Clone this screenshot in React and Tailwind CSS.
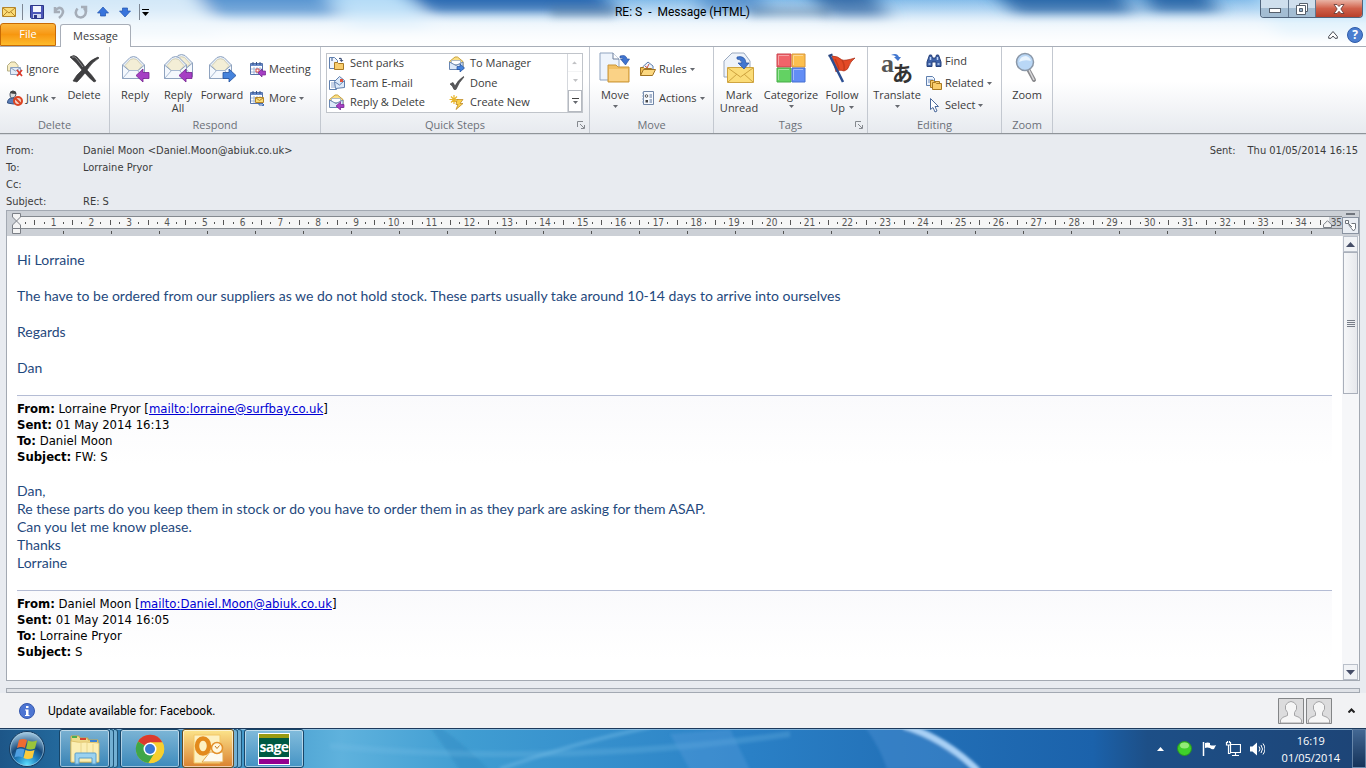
import { clsx } from 'clsx';

// ---------- Ribbon icons ----------

function PurpleArrow({ x = 0, y = 0 }) {
  return (
    <path
      transform={`translate(${x} ${y})`}
      d="M0 6.5 7 0v3.5h6v6H7V13z"
      fill="#a63fc4"
      stroke="#74238f"
      strokeWidth=".8"
    />
  );
}

function BlueArrow({ x = 0, y = 0 }) {
  return (
    <path
      transform={`translate(${x} ${y})`}
      d="M13 6.5 6 0v3.5H0v6h6V13z"
      fill="#4583dc"
      stroke="#22509e"
      strokeWidth=".8"
    />
  );
}

function OpenEnvelope({ x = 0, y = 0 }) {
  return (
    <g transform={`translate(${x} ${y})`} strokeLinejoin="round">
      <path d="M.5 9 8 1.5Q11.500 -.5 15 1.500L22.500 9v13.500H.5z" fill="#e6eef8" stroke="#8fa3bf" />
      <path d="M3 9.500 8.500 3.500Q11.500 2 14.500 3.500L20 9.500l-4 5H7z" fill="#f3eed6" stroke="#c9c3a4" strokeWidth=".7" />
      <path d="M.5 9 7 14.500h9L22.500 9v13.500H.5z" fill="#f4f8fd" stroke="#8fa3bf" />
      <path d="m1 22 6.500-7.500h8L22 22" fill="none" stroke="#a9bbd3" />
    </g>
  );
}

function ReplyIcon() {
  return (
    <svg className="size-8" viewBox="0 0 32 32" aria-hidden="true">
      <OpenEnvelope x={3} y={4} />
      <PurpleArrow x={17} y={17} />
    </svg>
  );
}

function ReplyAllIcon() {
  return (
    <svg className="size-8" viewBox="0 0 32 32" aria-hidden="true">
      <OpenEnvelope x={8} y={2} />
      <OpenEnvelope x={2} y={4} />
      <PurpleArrow x={17} y={17} />
    </svg>
  );
}

function ForwardIcon() {
  return (
    <svg className="size-8" viewBox="0 0 32 32" aria-hidden="true">
      <OpenEnvelope x={3} y={4} />
      <BlueArrow x={17} y={17} />
    </svg>
  );
}

function DeleteIcon() {
  return (
    <svg className="size-8" viewBox="0 0 32 32" aria-hidden="true">
      <path
        d="M2 5q4-3 7 0 5 5 8 10 6-8 13-10l1 1q-7 4-12 12 5 5 9 11l-2 1q-5-4-9-9-4 5-8 9l-4-1q3-6 9-11Q9 11 2 5z"
        fill="#3f3f41"
        stroke="#2c2c2e"
        strokeWidth=".6"
      />
      <path d="M4 5q3-1 5 2l6 8" fill="none" stroke="#8b8b8e" />
    </svg>
  );
}

function MoveIcon() {
  return (
    <svg className="size-8" viewBox="0 0 32 32" aria-hidden="true">
      <path d="M1 1h13l6 6v21H1z" fill="#eef4fc" stroke="#8fa3bf" />
      <path d="M14 1v6h6" fill="#fff" stroke="#6c7f9c" />
      <path d="M9 13h8l2 2h11v15H9z" fill="#f2c063" stroke="#c9963b" />
      <path d="M10 17h19v12H10z" fill="#fad286" />
      <path d="M21 4q6-2 7 3h2.500l-4 6-5-6h2.500q0-2-3-1z" fill="#3f74d0" stroke="#244c9c" strokeWidth=".6" />
    </svg>
  );
}

function MarkUnreadIcon() {
  return (
    <svg className="size-8" viewBox="0 0 32 32" aria-hidden="true">
      <path d="M1 9 9 1h12l6 8v16H1z" fill="#eef3fa" stroke="#9aa9bf" />
      <path d="M4.500 15.500h26v15h-26z" fill="#fbdc77" stroke="#cfa440" />
      <path d="m5 16 12.500 9L30 16M5 30l9-8M30 30l-9-8" fill="none" stroke="#cfa440" />
      <path d="M14 5q8-2 9 6h3l-5 6-6-6h4q-1-4-5-4z" fill="#4277d0" stroke="#25509f" strokeWidth=".7" />
    </svg>
  );
}

function CategorizeIcon() {
  return (
    <svg className="size-8" viewBox="0 0 32 32" aria-hidden="true">
      <path d="M2 2h14v13H2z" fill="#f0646a" stroke="#c9434d" />
      <path d="M17 2h13v13H17z" fill="#fcbf4e" stroke="#d8963a" />
      <path d="M2 16h14v14H2z" fill="#63d263" stroke="#46ab46" />
      <path d="M17 16h13v14H17z" fill="#628df5" stroke="#446fd0" />
      <path d="M3.500 13V3.500H14M18.500 13V3.500H28M3.500 28V17.500H14M18.500 28V17.500H28" fill="none" stroke="#fff" opacity=".4" />
    </svg>
  );
}

function FollowUpIcon() {
  return (
    <svg className="size-8" viewBox="0 0 32 32" aria-hidden="true">
      <path d="M6 4q6 0 10 4 3 1 13-2-5 4-6 8-1 4-5 5-6-2-8 1z" fill="#e34a26" stroke="#a82a12" strokeWidth=".7" />
      <path d="M9 7q3 6 4 10M16 8q3 5 2 10" fill="none" stroke="#b93417" strokeWidth="1.500" opacity=".7" />
      <path d="m4 4 13 26" stroke="#2c4f93" strokeWidth="2.500" />
      <path d="m2.500 4 4-1.500" stroke="#29457d" strokeWidth="2" />
    </svg>
  );
}

function TranslateIcon() {
  return (
    <svg className="size-8 overflow-visible" viewBox="0 0 32 32" aria-hidden="true">
      <text x="0" y="20" fontFamily="Liberation Serif, serif" fontWeight="bold" fontSize="26" fill="#555">a</text>
      <text x="11" y="29" fontFamily="Noto Sans CJK JP, sans-serif" fontWeight="bold" fontSize="21" fill="#333">あ</text>
      <path d="M10 3q6-3 8 2h2l-3 4-4-4h2q-1-2-5-2z" fill="#4277d0" />
    </svg>
  );
}

function ZoomIcon() {
  return (
    <svg className="size-8" viewBox="0 0 32 32" aria-hidden="true">
      <path d="m17 17 6 11" stroke="#8a8a8d" strokeWidth="4" strokeLinecap="round" />
      <path d="m18 18 5 10" stroke="#d9d9db" strokeWidth="1.500" />
      <circle cx="14" cy="10" r="8.500" fill="#b9d7f6" stroke="#8b98a8" strokeWidth="1.500" />
      <path d="M8 10q1-6 7-6 4 1 5 5-6-2-12 1z" fill="#e9f4fe" />
    </svg>
  );
}

// 16px icons

function MiniMail() {
  return (
    <g>
      <path d="M.5 5.500 6 1h2.500L14 5.500v7H.5z" fill="#fbdf83" stroke="#c9a13d" />
      <path d="M2.500 4.500h9v4h-9z" fill="#fff" stroke="#8fa6c6" strokeWidth=".7" />
      <path d="M.5 6 7 9.500 14 6v7.500H.5z" fill="#dce9f9" stroke="#6886b2" />
    </g>
  );
}

function MiniCalendar() {
  return (
    <g>
      <path d="M.5 2.500h12v11H.5z" fill="#fff" stroke="#5674aa" />
      <path d="M1 3h11v2H1z" fill="#6a8ccb" />
      <path d="M3 1v3M6.500 1v3M10 1v3" stroke="#36528b" />
      <path d="M1 8h11M1 11h11M4 6v7M7 6v7M10 6v7" stroke="#8ea7cf" strokeWidth=".8" />
    </g>
  );
}

function Folder({ x = 0, y = 0 }) {
  return (
    <path
      transform={`translate(${x} ${y})`}
      d="M.5 1.500h3l1 1h5v6h-9z"
      fill="#f8cd6d"
      stroke="#a97a22"
    />
  );
}

const smallIcons = {
  ignore: (
    <>
      <path d="M.5 4.500 4 1h4l3 3.500V10H.5z" fill="#f7edc5" stroke="#b5ae84" />
      <path d="M3.500 6.500h10v7h-10z" fill="#e3ecf8" stroke="#8ba0bf" />
      <path d="m4 7 4.500 3L13 7" fill="none" stroke="#8ba0bf" />
      <path d="m10 9 5 6m0-6-5 6" stroke="#dd3b2c" strokeWidth="1.800" />
    </>
  ),
  junk: (
    <>
      <path d="M3 4q0-3 3-3t3 3-3 4-3-4z" fill="#dcdcdc" stroke="#4b5563" />
      <path d="M3 3q1-3 4-2t2 3q-4 0-6-1z" fill="#444" />
      <path d="M.5 13q0-5 5-5t5 5l-4 1z" fill="#5c7fb9" stroke="#344f7f" />
      <circle cx="11" cy="11" r="4" fill="#f7d3c7" stroke="#dc4523" strokeWidth="2" />
      <path d="m8 8 6 6" stroke="#dc4523" strokeWidth="2" />
    </>
  ),
  meeting: (
    <>
      <MiniCalendar />
      <path d="M6 8h3v3H6z" fill="#fff" stroke="#d64545" />
      <path d="m8 12 4-4v2h3.500v4H12v2z" fill="#a63fc4" stroke="#74238f" strokeWidth=".7" />
    </>
  ),
  more: (
    <>
      <MiniCalendar />
      <path d="M5.500 7.500h8v5h-8z" fill="#fbdc77" stroke="#b4852a" />
      <path d="m6 8 3.500 2.500L13 8" fill="none" stroke="#b4852a" />
      <path d="M9 13v2h5m-2-2 2 2-2 1" fill="none" stroke="#3767b5" />
    </>
  ),
  moveTo: (
    <>
      <path d="M.5 1.500h5l3 3v8h-8z" fill="#eef4fc" stroke="#5f7fae" />
      <path d="M3 5V2" stroke="#33528a" />
      <Folder x={5} y={5} />
      <path d="M10 2q3-1 3 2h1.500L12.500 6 10.500 4H12q0-1-2-1z" fill="#3c4f77" />
    </>
  ),
  team: (
    <>
      <path d="M.5 5.500h7v9h-7z" fill="#fff" stroke="#5f7fae" />
      <path d="M2 8h4M2 10h4M2 12h4" stroke="#8ea7cf" />
      <path d="m5.500 6.500 5-5 5 4v7l-9 1z" fill="#dce9f9" stroke="#5f7fae" />
      <path d="m6 7 4.500 3L15 6" fill="none" stroke="#5f7fae" />
      <path d="M11 4h3v3h-3z" fill="#e1533d" />
    </>
  ),
  replyDelete: (
    <>
      <MiniMail />
      <path d="m7 12 4.500-4v2.500H15v3h-3.500V16z" fill="#a63fc4" stroke="#74238f" strokeWidth=".7" />
    </>
  ),
  manager: (
    <>
      <MiniMail />
      <path d="m15.500 12-4.500-4v2.500H8v3h3V16z" fill="#4583dc" stroke="#22509e" strokeWidth=".7" />
    </>
  ),
  done: <path d="m1 9 3-1.500L6 11q3-6 8.500-9.500l.5.5q-5 5-8 12.500H5Q4 11 1 9z" fill="#58595b" stroke="#3a3a3c" strokeWidth=".6" />,
  create: (
    <>
      <path d="M5 1v9M.5 5.500h9M2 2.500l6 6M8 2.500l-6 6" stroke="#e8b52b" strokeWidth="1.200" />
      <path d="M8 5.500h6l-3 4h3l-7 6 2-5H7z" fill="#fbd04b" stroke="#b8821d" strokeWidth=".7" />
    </>
  ),
  rules: (
    <>
      <path d="M2.500 6 8 1l5 4v6H2.500z" fill="#eef4fc" stroke="#5f7fae" />
      <path d="m5 5 5 4M9 3l-3 6" stroke="#c95545" />
      <path d="M.5 14.500v-8h3l1 1h7v2" fill="#f2bf54" stroke="#a07322" />
      <path d="m.5 14.500 3-6h12l-3 6z" fill="#fcd880" stroke="#a07322" />
    </>
  ),
  actions: (
    <>
      <path d="M3.500 1.500h10v13h-10z" fill="#f7fafe" stroke="#7187a8" />
      <path d="M2 3h2M2 6h2M2 9h2M2 12h2" stroke="#8fa4c4" />
      <circle cx="6.500" cy="6" r="1.300" fill="none" stroke="#333" strokeWidth=".8" />
      <path d="M5.500 10H8v2.500H5.500z" fill="#444" />
      <path d="M9.500 5h2.500M9.500 7H12M9.500 10H12M9.500 12H12" stroke="#57709a" />
    </>
  ),
  find: (
    <>
      <path d="M1 9 3.500 2h2l1 3h3l1-3h2L15 9v4.500h-5V9H6v4.500H1z" fill="#3d60a6" stroke="#26407a" />
      <path d="M2.500 11h2M11.500 11h2M4.500 4v3M11.500 4v3" stroke="#bcd2f5" strokeWidth="1.500" />
    </>
  ),
  related: (
    <>
      <path d="M.5 1.500h6l2 2v7h-8z" fill="#eef4fc" stroke="#5f7fae" />
      <path d="M2 5h5M2 7h5" stroke="#6f8ec0" />
      <Folder x={4} y={4} />
      <Folder x={6} y={6} />
    </>
  ),
  select: <path d="M4.500 1.500v11l2.500-2 2 4.500 2-1-2-4.500h3.500z" fill="#fff" stroke="#4c6a9c" />,
};

function SmallIcon({ name }) {
  return (
    <svg className="size-4 shrink-0" viewBox="0 0 16 16" aria-hidden="true">
      {smallIcons[name]}
    </svg>
  );
}

// ---------- Ribbon ----------

function Caret() {
  return (
    <svg className="w-[5px] h-[3px] shrink-0" viewBox="0 0 5 3" aria-hidden="true">
      <path d="M0 0h5L2.500 3z" fill="#66696f" />
    </svg>
  );
}

function BigButton({ icon: Icon, lines, caret, className }) {
  const inline = caret && lines.length > 1;
  return (
    <button type="button" className={clsx('flex flex-col items-center pt-[2px] leading-[13px]', className)}>
      <Icon />
      <span className="mt-1">{lines[0]}</span>
      {lines[1] && (
        <span className="flex items-center gap-1">
          {lines[1]}
          {inline && <Caret />}
        </span>
      )}
      {caret && !inline && <span className="mt-1"><Caret /></span>}
    </button>
  );
}

function SmallButton({ icon, label, caret }) {
  return (
    <button type="button" className="flex items-center gap-[3px] h-[22px] whitespace-nowrap">
      <SmallIcon name={icon} />
      <span>{label}</span>
      {caret && <Caret />}
    </button>
  );
}

function Group({ title, launcher, className, children }) {
  return (
    <section className={clsx('flex flex-col shrink-0 border-r border-[#c3c8d0]', className)}>
      <div className="flex grow pt-[3px]">{children}</div>
      <div className="flex items-center h-4 text-[#6b7078]">
        <h2 className="grow text-center">{title}</h2>
        {launcher && (
          <button type="button" className="-ml-3 mr-1" aria-label={`${title} options`}>
            <svg className="size-2" viewBox="0 0 8 8">
              <path d="M.5 6V.5H6M3 3l4 4M7.500 4v3.500H4" fill="none" stroke="#85898f" />
            </svg>
          </button>
        )}
      </div>
    </section>
  );
}

const quickSteps = [
  ['moveTo', 'Sent parks'],
  ['manager', 'To Manager'],
  ['team', 'Team E-mail'],
  ['done', 'Done'],
  ['replyDelete', 'Reply & Delete'],
  ['create', 'Create New'],
];

function Ribbon() {
  return (
    <div className="flex h-[87px] border-b border-[#8f9499] bg-linear-to-b from-white from-40% to-[#e7eaef] text-[#3b3b3b]">
      <Group title="Delete" className="w-[110px]">
        <div className="flex flex-col gap-[7px] w-[60px] pl-[7px] pt-2">
          <SmallButton icon="ignore" label="Ignore" />
          <SmallButton icon="junk" label="Junk" caret />
        </div>
        <BigButton icon={DeleteIcon} lines={['Delete']} className="w-12" />
      </Group>

      <Group title="Respond" className="w-[211px]">
        <BigButton icon={ReplyIcon} lines={['Reply']} className="w-[50px]" />
        <BigButton icon={ReplyAllIcon} lines={['Reply', 'All']} className="w-9" />
        <BigButton icon={ForwardIcon} lines={['Forward']} className="w-[52px]" />
        <div className="flex flex-col gap-[7px] pl-[2px] pt-2">
          <SmallButton icon="meeting" label="Meeting" />
          <SmallButton icon="more" label="More" caret />
        </div>
      </Group>

      <Group title="Quick Steps" launcher className="w-[269px]">
        <div className="flex w-[257px] h-[60px] ml-[5px] mt-[3px] border border-[#c0c4ca] bg-white">
          <div className="grid grid-cols-2 grow">
            {quickSteps.map(([icon, label]) => (
              <button key={label} type="button" className="flex items-center gap-[5px] pl-[2px] whitespace-nowrap">
                <SmallIcon name={icon} />
                {label}
              </button>
            ))}
          </div>
          <div className="flex flex-col w-[15px] border-l border-[#d5d8dd]">
            <button type="button" className="flex grow items-center justify-center rotate-180 opacity-40" aria-label="Previous row"><Caret /></button>
            <button type="button" className="flex grow items-center justify-center border-t border-[#e2e4e8] opacity-40" aria-label="Next row"><Caret /></button>
            <button type="button" className="flex flex-col gap-[2px] grow items-center justify-center border border-[#b5b9c0]" aria-label="More quick steps">
              <span className="w-[7px] h-px bg-[#444]" />
              <Caret />
            </button>
          </div>
        </div>
      </Group>

      <Group title="Move" className="w-[124px]">
        <BigButton icon={MoveIcon} lines={['Move']} caret className="w-[50px]" />
        <div className="flex flex-col gap-[7px] pt-2">
          <SmallButton icon="rules" label="Rules" caret />
          <SmallButton icon="actions" label="Actions" caret />
        </div>
      </Group>

      <Group title="Tags" launcher className="w-[154px]">
        <BigButton icon={MarkUnreadIcon} lines={['Mark', 'Unread']} className="w-[50px]" />
        <BigButton icon={CategorizeIcon} lines={['Categorize']} caret className="w-[54px]" />
        <BigButton icon={FollowUpIcon} lines={['Follow', 'Up']} caret className="w-12" />
      </Group>

      <Group title="Editing" className="w-[134px]">
        <BigButton icon={TranslateIcon} lines={['Translate']} caret className="w-[58px]" />
        <div className="flex flex-col">
          <SmallButton icon="find" label="Find" />
          <SmallButton icon="related" label="Related" caret />
          <SmallButton icon="select" label="Select" caret />
        </div>
      </Group>

      <Group title="Zoom" className="w-[51px]">
        <BigButton icon={ZoomIcon} lines={['Zoom']} className="w-[50px]" />
      </Group>
    </div>
  );
}

// ---------- Title bar ----------

function TitleBar() {
  return (
    <header className="relative overflow-hidden bg-linear-to-b from-[#86bdea] via-[#cfe6f8] to-[#fbfdff]">
      <svg className="absolute inset-0 size-full" viewBox="0 0 1366 48" preserveAspectRatio="none" aria-hidden="true">
        <defs>
          <filter id="soft" x="-20%" y="-60%" width="140%" height="220%">
            <feGaussianBlur stdDeviation="10 5" />
          </filter>
          <linearGradient id="fade" x1="0" y1="0" x2="0" y2="1">
            <stop offset="0" stopColor="#fff" stopOpacity="0" />
            <stop offset=".2" stopColor="#fff" stopOpacity=".15" />
            <stop offset=".5" stopColor="#fff" stopOpacity=".65" />
            <stop offset="1" stopColor="#fff" stopOpacity=".95" />
          </linearGradient>
        </defs>
        <g filter="url(#soft)">
          <path d="M-20-20h210l30 60H-20z" fill="#d3e8f8" />
          <path d="M185-20h125l30 38H215z" fill="#5b97d2" />
          <path d="M325-20h65l40 50H350z" fill="#b5dcf7" />
          <path d="M395-20h195l30 34H430z" fill="#2f6db4" />
          <path d="M700-20h50l20 34h-70z" fill="#5a95d0" />
          <path d="M800-20h65l25 40h-60z" fill="#3d73ae" />
          <path d="M985-20h130l20 36h-120z" fill="#2f6cac" />
          <path d="M1140-20h60l20 34h-70z" fill="#2f6cac" />
          <path d="M1250-20h140v60h-110z" fill="#b0dcf8" />
        </g>
        <path d="M0 0h1366v48H0z" fill="url(#fade)" />
      </svg>

      <div className="relative flex items-start h-6">
        <div className="flex flex-1 items-center gap-[6px] h-6 pl-[2px]">
          <svg className="size-[14px]" viewBox="0 0 14 14" aria-hidden="true">
            <path d="M.5 2.500h13v9H.5z" fill="#fbdc77" stroke="#b4852a" />
            <path d="m1 3 6 5 6-5M1 11l4-4M13 11 9 7" fill="none" stroke="#b4852a" />
          </svg>
          <span className="w-px h-4 bg-[#7d8794]" />
          <button type="button" aria-label="Save">
            <svg className="size-4" viewBox="0 0 16 16">
              <path d="M1.500 1.500h13v13h-12l-1-1z" fill="#4b57b8" stroke="#2d3788" />
              <path d="M4 2h8v6H4z" fill="#f3f6fd" />
              <path d="M4 10h8v4H4z" fill="#cfd6ef" />
              <path d="M5 11h3v3H5z" fill="#2d3788" />
            </svg>
          </button>
          <button type="button" aria-label="Undo">
            <svg className="size-4" viewBox="0 0 16 16">
              <path d="M4 3v5h5M4 7q4-5 7-2 3 4-3 9" fill="none" stroke="#a5adb8" strokeWidth="2.500" />
            </svg>
          </button>
          <button type="button" aria-label="Redo">
            <svg className="size-4" viewBox="0 0 16 16">
              <path d="M8 3h5v5M4.500 4.500Q1 9 4.500 12.500 9 15 12 11q2-4-1-7" fill="none" stroke="#a5adb8" strokeWidth="2.500" />
            </svg>
          </button>
          <button type="button" aria-label="Previous item">
            <svg className="size-4" viewBox="0 0 16 16">
              <path d="m8 3 5.500 6H10.500v3h-5V9H2.500z" fill="#3874dc" stroke="#2355ae" strokeWidth=".7" />
            </svg>
          </button>
          <button type="button" aria-label="Next item">
            <svg className="size-4" viewBox="0 0 16 16">
              <path d="m8 13 5.500-6H10.500V4h-5v3H2.500z" fill="#3874dc" stroke="#2355ae" strokeWidth=".7" />
            </svg>
          </button>
          <span className="w-px h-4 bg-[#7d8794]" />
          <button type="button" className="-ml-1 flex flex-col items-center gap-[2px]" aria-label="Customize toolbar">
            <span className="w-[7px] h-px bg-black" />
            <svg className="w-[7px] h-1" viewBox="0 0 7 4"><path d="M0 0h7L3.500 4z" /></svg>
          </button>
        </div>
        <div className="relative flex items-center justify-center h-6 text-xs font-[Roboto,sans-serif] text-black">
          <span className="absolute right-full w-16 h-2 bg-[#4c6f94]/50 blur-xs" />
          <h1 className="whitespace-pre">RE: S  -  Message (HTML)</h1>
          <span className="absolute left-full w-20 h-2 bg-[#4c6f94]/50 blur-xs" />
        </div>
        <div className="flex flex-1 justify-end pr-[3px]">
          <div className="flex h-[18px] border border-t-0 border-[#50647c] rounded-b-[4px] overflow-hidden">
            <button type="button" className="w-7 flex items-center justify-center bg-linear-to-b from-[#cfdfed] from-50% to-[#a3bdd3] to-50% border-r border-[#62768d]" aria-label="Minimize">
              <span className="w-3 h-[5px] mt-1 bg-white border border-[#56606c]" />
            </button>
            <button type="button" className="w-[27px] flex items-center justify-center bg-linear-to-b from-[#cfdfed] from-50% to-[#a3bdd3] to-50% border-r border-[#62768d]" aria-label="Restore">
              <svg className="size-3" viewBox="0 0 12 12" fill="#fff" stroke="#56606c">
                <path d="M3.500.5h8v8h-8z" />
                <path d="M.5 2.500h9v9h-9z" />
                <path d="M3.500 5.500h3v3h-3z" fill="#93b2cd" />
              </svg>
            </button>
            <button type="button" className="w-[46px] flex items-center justify-center bg-linear-to-b from-[#e8b3a5] via-[#d0604a] via-50% to-[#b8402a]" aria-label="Close">
              <svg className="w-3 h-[10px]" viewBox="0 0 12 10">
                <path d="M1 .5h3l2 2 2-2h3L7.800 5 11 9.500H8L6 7.300 4 9.500H1L4.200 5z" fill="#fff" stroke="#5d3430" strokeWidth=".8" />
              </svg>
            </button>
          </div>
        </div>
      </div>

      <nav className="relative flex items-end h-[23px] border-b border-[#a8aeb8]">
        <button type="button" className="w-14 h-[23px] rounded-t-[3px] border border-[#c76a05] bg-linear-to-b from-[#fbb63c] via-[#f7970f] to-[#fdbb2c] text-white">File</button>
        <button type="button" className="w-[71px] h-[23px] ml-1 -mb-px rounded-t-[3px] border border-b-0 border-[#a8aeb8] bg-white text-[#3b3b3b]">Message</button>
        <div className="flex grow items-center justify-end gap-[9px] h-[23px] pr-[3px]">
          <button type="button" aria-label="Collapse ribbon">
            <svg className="w-[10px] h-2" viewBox="0 0 10 8">
              <path d="m.7 5.500 4.300-5 4.300 5v1.800H7L5 5 3 7.300H.7z" fill="#fff" stroke="#484d54" />
            </svg>
          </button>
          <button type="button" className="size-4 rounded-full border border-[#2f5ca9] bg-[#4b7ed0] text-white text-xs leading-none font-bold" aria-label="Help">?</button>
        </div>
      </nav>
    </header>
  );
}

// ---------- Message ----------

function HeaderRow({ label, children }) {
  return (
    <div className="flex h-[17px]">
      <dt className="w-[77px]">{label}</dt>
      <dd>{children}</dd>
    </div>
  );
}

function Ruler() {
  const marks = Array.from({ length: 34 }, (_, i) => i + 1);
  return (
    <div className="flex h-[25px] bg-[#ccd0d6]">
      <div className="relative flex flex-col grow overflow-hidden pl-[9px]">
        <div className="flex h-[13px] mt-[5px] border-y border-[#84898f] bg-[#f6f6f6] text-[10px] leading-none text-[#555] font-['DejaVu_Sans_Condensed','DejaVu_Sans',sans-serif]">
          <div className="flex w-[14px] items-center justify-end pr-1">
            <span className="w-px h-[2px] bg-[#555]" />
          </div>
          {marks.map((n) => (
            <div key={n} className="grid grid-cols-4 flex-1 items-center justify-items-center">
              <span className="w-px h-[5px] bg-[#555]" />
              <span className="w-px h-[2px] bg-[#555]" />
              <span className="flex w-0 justify-center">{n}</span>
              <span className="w-px h-[2px] bg-[#555]" />
            </div>
          ))}
          <div className="flex items-center w-[14px] pl-[5px]">
            <span className="w-px h-[5px] bg-[#555]" />
          </div>
          <div className="flex items-center justify-end w-[13px] bg-[#ccd0d6]">35</div>
        </div>
        <div className="flex pt-[2px] overflow-hidden">
          {Array.from({ length: 60 }, (_, i) => (
            <span key={i} className="w-12 h-[3px] shrink-0 border-r border-[#555]" />
          ))}
        </div>
        {/* indent handles */}
        <svg className="absolute left-[5px] top-[2px] w-[9px] h-[22px]" viewBox="0 0 9 22" fill="#f4f4f4" stroke="#7b7f86" aria-hidden="true">
          <path d="M.5.5h8V4l-4 4-4-4z" />
          <path d="m4.500 8 4 4v3.500h-8V12z" />
          <path d="M.5 15.500h8v5h-8z" />
        </svg>
        <svg className="absolute right-[10px] top-[9px] w-[9px] h-2" viewBox="0 0 9 8" fill="#f4f4f4" stroke="#7b7f86" aria-hidden="true">
          <path d="m4.500.7 4 4v2.800h-8V4.700z" />
        </svg>
      </div>
      <div className="flex flex-col w-[17px] items-center">
        <span className="w-[9px] h-[2px] my-[2px] bg-[#70757d]" />
        <button type="button" className="w-[17px] h-[17px] border border-[#8a93a1] bg-[#e9edf3]" aria-label="Toggle ruler">
          <svg className="size-[15px]" viewBox="0 0 15 15" fill="#fff" stroke="#6e737b">
            <path d="M2.500 2.500h3v3h-3zM8.500 5.500h4v5l-2 2.500-2-2.500-3-4" />
            <path d="m5 5 4 4" />
          </svg>
        </button>
      </div>
    </div>
  );
}

function ScrollBar() {
  return (
    <div className="flex flex-col w-[17px] px-px bg-[#f6f7f9] shrink-0">
      <button type="button" className="flex items-center justify-center h-4 border border-[#b9bfc9] bg-[#f1f3f6]" aria-label="Scroll up">
        <svg className="w-[9px] h-[5px]" viewBox="0 0 9 5"><path d="M0 5h9L4.500 0z" fill="#464e68" /></svg>
      </button>
      <div className="flex flex-col items-center justify-center gap-px h-[142px] border border-[#a9afba] bg-linear-to-r from-[#f6f7f9] to-[#e6e8ec]">
        <span className="w-2 h-px bg-[#777d88]" />
        <span className="w-2 h-px bg-[#777d88]" />
        <span className="w-2 h-px bg-[#777d88]" />
        <span className="w-2 h-px bg-[#777d88]" />
      </div>
      <button type="button" className="flex items-center justify-center h-4 mt-auto border border-[#b9bfc9] bg-[#f1f3f6]" aria-label="Scroll down">
        <svg className="w-[9px] h-[5px]" viewBox="0 0 9 5"><path d="M0 0h9L4.500 5z" fill="#464e68" /></svg>
      </button>
    </div>
  );
}

function QuotedHeader({ from, email, sent, to, subject }) {
  return (
    <div className="border-t border-[#b4bcd4] bg-linear-to-b from-[#fafafc] to-white pt-[5px] text-[13px] leading-4 text-black font-['DejaVu_Sans_Condensed','DejaVu_Sans',sans-serif]">
      <p><b>From:</b> {from} [<a href={`mailto:${email}`} className="text-[#0000d4] underline">mailto:{email}</a>]</p>
      <p><b>Sent:</b> {sent}</p>
      <p><b>To:</b> {to}</p>
      <p><b>Subject:</b> {subject}</p>
    </div>
  );
}

function Message() {
  return (
    <main className="flex flex-col grow px-[6px] border-t border-[#d5d9df] bg-[#e8ebf0]">
      <div className="flex justify-between pt-[7px] pr-[2px] text-[#3b3b3b] font-['DejaVu_Sans_Condensed','DejaVu_Sans',sans-serif]">
        <dl className="leading-[17px]">
          <HeaderRow label="From:">Daniel Moon &lt;Daniel.Moon@abiuk.co.uk&gt;</HeaderRow>
          <HeaderRow label="To:">Lorraine Pryor</HeaderRow>
          <HeaderRow label="Cc:" />
          <HeaderRow label="Subject:">RE: S</HeaderRow>
        </dl>
        <dl className="flex gap-3 leading-[17px]">
          <dt>Sent:</dt>
          <dd>Thu 01/05/2014 16:15</dd>
        </dl>
      </div>

      <div className="flex flex-col grow border border-[#a3a9b2] bg-white">
        <Ruler />
        <div className="flex grow">
          <article className="grow pt-[15px] px-[10px] font-[Lato,sans-serif] text-[14px] leading-[18px] text-[#1f497d]">
            <div className="flex flex-col gap-[18px]">
              <p>Hi Lorraine</p>
              <p>The have to be ordered from our suppliers as we do not hold stock. These parts usually take around 10-14 days to arrive into ourselves</p>
              <p>Regards</p>
              <p>Dan</p>
            </div>
            <div className="mt-[18px]">
              <QuotedHeader from="Lorraine Pryor" email="lorraine@surfbay.co.uk" sent="01 May 2014 16:13" to="Daniel Moon" subject="FW: S" />
            </div>
            <div className="mt-[17px] mb-[18px]">
              <p>Dan,</p>
              <p>Re these parts do you keep them in stock or do you have to order them in as they park are asking for them ASAP.</p>
              <p>Can you let me know please.</p>
              <p>Thanks</p>
              <p>Lorraine</p>
            </div>
            <QuotedHeader from="Daniel Moon" email="Daniel.Moon@abiuk.co.uk" sent="01 May 2014 16:05" to="Lorraine Pryor" subject="S" />
          </article>
          <ScrollBar />
        </div>
      </div>
      <div className="h-[5px] mt-[7px] border border-[#a3a9b2] bg-[#dfe2e7]" />
    </main>
  );
}

function Person() {
  return (
    <svg className="size-[26px]" viewBox="0 0 26 26" aria-hidden="true">
      <path d="M.5.5h25v25H.5z" fill="#dcdcdd" stroke="#838587" />
      <path d="M2.500 25v-3q1-3 7-4.500v-3q-3-3-2-7 2-4 5.500-4t5.500 4q1 4-2 7v3q6 1.500 7 4.500v3z" fill="#f6f6f6" stroke="#a4a4a6" />
    </svg>
  );
}

function PeoplePane() {
  return (
    <section className="flex items-center h-[35px] pl-[19px] pr-[11px] bg-[#f1f2f4] text-xs font-[Roboto,sans-serif] text-black">
      <svg className="size-4" viewBox="0 0 16 16" aria-hidden="true">
        <circle cx="8" cy="8" r="7.500" fill="#4d75d2" stroke="#3558ae" />
        <path d="M7 3h2.500v2H7zM6 6.500h3.500V12h1v1H6v-1h1V7.500H6z" fill="#fff" />
      </svg>
      <p className="ml-[13px] grow">Update available for: Facebook.</p>
      <div className="flex gap-[2px] mr-4">
        <Person />
        <Person />
      </div>
      <button type="button" aria-label="Expand people pane">
        <svg className="w-[7px] h-[5px]" viewBox="0 0 7 5"><path d="m.5 4.500 3-3 3 3" fill="none" stroke="#222" strokeWidth="2" /></svg>
      </button>
    </section>
  );
}

// ---------- Taskbar ----------

const taskButton = 'flex items-center justify-center h-[39px] rounded-[3px] border border-[#174568] shadow-[inset_0_0_0_1px_rgba(255,255,255,0.5)] bg-linear-to-b from-[#8fc2de]/80 to-[#3f8dbe]/70';

// second and third edges of a stacked taskbar button
function StackEdges() {
  return (
    <>
      <span className="w-1 h-[39px] rounded-r-[3px] border border-l-0 border-[#1d5478] bg-[#72b0d3]" />
      <span className="w-1 h-[39px] rounded-r-[3px] border border-l-0 border-[#1d5478] bg-[#72b0d3]" />
    </>
  );
}

function Taskbar() {
  return (
    <footer className="relative h-10 overflow-hidden border-t border-[#1d3a5c] bg-[#2a80c6]">
      <svg className="absolute inset-0 size-full" viewBox="0 0 1366 39" preserveAspectRatio="none" aria-hidden="true">
        <defs>
          <linearGradient id="wall" x1="0" x2="1" y1="0" y2="0">
            <stop offset="0" stopColor="#1d5688" />
            <stop offset=".07" stopColor="#2774a8" />
            <stop offset=".2" stopColor="#4aa0d0" />
            <stop offset=".25" stopColor="#5fb2dd" />
            <stop offset=".34" stopColor="#409dd2" />
            <stop offset=".55" stopColor="#2a80c6" />
            <stop offset=".66" stopColor="#2371b8" />
            <stop offset=".8" stopColor="#1b62ab" />
            <stop offset=".84" stopColor="#1d4f87" />
            <stop offset="1" stopColor="#1d4476" />
          </linearGradient>
          <filter id="streak"><feGaussianBlur stdDeviation="1.500" /></filter>
        </defs>
        <path d="M0 0h1366v39H0z" fill="url(#wall)" />
        <g filter="url(#streak)" fill="none">
          <path d="M430-2q15 20 30 44h30Q470 20 440-2z" fill="#2f8cc4" opacity=".5" />
          <path d="M500 40Q570 15 650-2" stroke="#79bee8" strokeWidth="4" opacity=".4" />
          <path d="M330 17Q560 38 790 5" stroke="#79bee8" strokeWidth="6" opacity=".25" />
          <path d="M670 5l20 36h60L730 0z" fill="#5a9fdc" opacity=".35" />
          <path d="M865-2q15 20 22 42h80Q940 10 905-2z" fill="#4f94d8" opacity=".4" />
          <path d="M904-3q40 12 74 45" stroke="#a8d0f5" strokeWidth="7" />
        </g>
        <path d="M0 .5h1366" stroke="#a9cbe4" opacity=".7" />
      </svg>

      <div className="relative flex items-center h-[39px]">
        <button type="button" className="ml-2 mr-[13px]" aria-label="Start">
          <svg className="size-[38px]" viewBox="0 0 38 38">
            <defs>
              <radialGradient id="orb" cx=".5" cy=".95" r=".9">
                <stop offset="0" stopColor="#5fe0ff" />
                <stop offset=".35" stopColor="#2080bf" />
                <stop offset=".6" stopColor="#174a7c" />
                <stop offset="1" stopColor="#9cc3dd" />
              </radialGradient>
            </defs>
            <circle cx="19" cy="19" r="17.500" fill="url(#orb)" stroke="#16395c" />
            <circle cx="19" cy="19" r="16.500" fill="none" stroke="#a8cfe6" opacity=".6" />
            <path d="M11 10q4-2 8 0l-2 8q-4-2-8 0z" fill="#ee6b31" />
            <path d="M20 10.500q4 2 9 0l-2 8q-5 2-9 0z" fill="#9ac43b" />
            <path d="M8.500 19.500q4-2 8 0l-2 8q-4-2-8 0z" fill="#4f9fe2" />
            <path d="M17.500 20q4 2 9 0l-2 8q-5 2-9 0z" fill="#fbcb3c" />
          </svg>
        </button>

        <button type="button" className={clsx(taskButton, 'w-[51px]')} aria-label="Windows Explorer">
          <svg className="size-8" viewBox="0 0 32 32">
            <path d="M2 3h8l1 2h8v2h10v22H2z" fill="#eedb8c" stroke="#c9a74a" />
            <path d="M3 3h5v2H3z" fill="#4caf50" />
            <path d="M11 5h6v2h-6z" fill="#d9432f" />
            <path d="M21 7h7v2h-7z" fill="#3b83d4" />
            <path d="M2 8q8 2 14 1l14 1v19H2z" fill="#fbeeb3" stroke="#d9bb62" strokeWidth=".8" />
            <path d="M12 10v11M18 10v11M24 11v10" stroke="#e8d58c" />
            <path d="M6 31V21q0-1 1-1h19q1 0 1 1v10h-4v-6H10v6z" fill="#9ad2f0" stroke="#5a9fcb" />
          </svg>
        </button>
        <StackEdges />

        <button type="button" className={clsx(taskButton, 'w-[60px] ml-[2px]')} aria-label="Chrome">
          <svg className="size-[30px]" viewBox="0 0 30 30">
            <circle cx="15" cy="15" r="14" fill="#f7cf2f" />
            <path d="M15 15 3 7.500A14 14 0 0 1 27.500 8.500H15z" fill="#dc3a2d" />
            <path d="M15 15 3 7.500A14 14 0 0 0 13.500 29l6-10z" fill="#3fa648" />
            <path d="M15 8.500h12.500A14 14 0 0 1 13.500 29l6.500-10z" fill="#f7cf2f" />
            <circle cx="15" cy="15" r="6.500" fill="#fff" />
            <circle cx="15" cy="15" r="5" fill="#3978d4" />
          </svg>
        </button>

        <button type="button" className="flex items-center justify-center w-[52px] h-[39px] ml-[2px] rounded-[3px] border border-[#6a4d1f] bg-linear-to-b from-[#fbe48a] to-[#d9822f] shadow-[inset_0_0_0_1px_rgba(255,255,255,0.6)]" aria-label="Outlook">
          <svg className="size-8" viewBox="0 0 32 32">
            <path d="M2 2h26v28H2z" fill="#fdf1c2" stroke="#f3c865" />
            <path d="m10 29 8-10h13v10z" fill="#fdfaf0" stroke="#e3a84b" />
            <ellipse cx="11" cy="13" rx="6" ry="7.500" fill="none" stroke="#e38a1c" strokeWidth="4.500" />
            <circle cx="25" cy="15" r="5.500" fill="#fff8df" stroke="#e3912c" strokeWidth="1.500" />
            <path d="M23 13l2 2.500 2.500-3" fill="none" stroke="#c4781b" />
          </svg>
        </button>
        <StackEdges />

        <button type="button" className={clsx(taskButton, 'w-[60px] ml-[2px]')} aria-label="Sage">
          <span className="flex flex-col w-8 h-8 border border-white bg-[#005a43] text-white">
            <span className="h-1 bg-[#999b12]" />
            <span className="flex grow items-center justify-center border-b-2 border-white text-[14px] leading-none font-bold tracking-tighter">sage</span>
            <span className="h-[5px] bg-[#93008f]" />
          </span>
        </button>

        <div className="flex items-center h-full ml-auto text-white">
          <button type="button" aria-label="Show hidden icons">
            <svg className="w-[7px] h-1" viewBox="0 0 7 4"><path d="M0 4h7L3.500 0z" fill="#fff" /></svg>
          </button>
          <svg className="size-[15px] ml-[13px]" viewBox="0 0 15 15" aria-hidden="true">
            <circle cx="7.500" cy="7.500" r="7" fill="#3fd02b" stroke="#2b9420" />
            <ellipse cx="7.500" cy="4.500" rx="4.500" ry="3" fill="#a9f08c" opacity=".8" />
          </svg>
          <svg className="size-4 ml-[9px]" viewBox="0 0 16 16" aria-hidden="true">
            <path d="M2.500 1v14" stroke="#fff" strokeWidth="1.500" />
            <path d="M4 2q3-1 5 0v2q3 1 6 0l-2 4q-2 1-4-1-3-1-5 0z" fill="#fff" />
          </svg>
          <svg className="size-4 ml-2" viewBox="0 0 16 16" fill="none" stroke="#fff" aria-hidden="true">
            <path d="M5.500 3.500h10v8h-10zM7 14.500h7M10.500 12v2" strokeWidth="1.200" />
            <path d="M1.500 1v3h4V1M3.500 4v8.500h2M2.500 0v2M4.500 0v2" strokeWidth="1.200" />
          </svg>
          <svg className="size-4 ml-2" viewBox="0 0 16 16" aria-hidden="true">
            <path d="M1 5.500h2.500L8 1.500v13l-4.500-4H1z" fill="#fff" />
            <path d="M10 5.500q2 2.500 0 5M12 4q3 4 0 8M14 2.500q4 5.500 0 11" fill="none" stroke="#fff" />
          </svg>
          <time className="flex flex-col items-center ml-[17px] mr-3 leading-[17px]">
            <span>16:19</span>
            <span>01/05/2014</span>
          </time>
          <button type="button" className="w-[14px] h-full border border-[#7f9dbd]/70 bg-linear-to-b from-[#5d7fa6]/60 to-[#15335a]" aria-label="Show desktop" />
        </div>
      </div>
    </footer>
  );
}

export default function App() {
  return (
    <div className="flex flex-col min-h-screen bg-[#e8ebf0] font-['Open_Sans','Noto_Sans',sans-serif] text-[11px]">
      <TitleBar />
      <Ribbon />
      <Message />
      <PeoplePane />
      <Taskbar />
    </div>
  );
}
